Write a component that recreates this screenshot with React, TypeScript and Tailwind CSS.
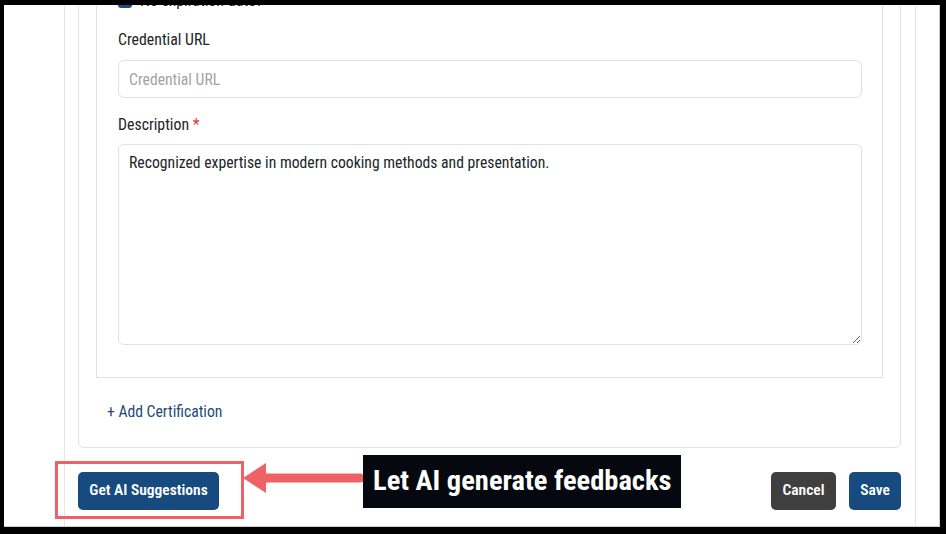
import React from "react";

export default function App() {
  return (
    <div
      className="relative w-[946px] h-[534px] bg-black pt-[5px] pl-[4px] pr-[6px] pb-[7px] overflow-hidden"
      style={{ fontFamily: "Roboto, 'Noto Sans', sans-serif" }}
    >
      <div className="w-full h-full bg-white border-r border-b border-[#cfcfcf] overflow-hidden [font-stretch:semi-condensed]">
        <div className="ml-[60px] w-[852px] h-full border-x border-[#e4e4ea] pl-[13px] pr-[14px] flex flex-col">
          {/* Card */}
          <div className="mt-[-63px] border border-[#e2e2e6] rounded-md px-[17px] pt-[17px] pb-[24px]">
            {/* Inner card */}
            <div className="border border-[#e2e2e6] pl-[21px] pr-[20px] pt-[30px] pb-[32px]">
              <div className="flex items-center h-[20px] gap-[8px]">
                <div className="w-[14px] h-[14px] rounded-[3px] bg-[#1d4b7c]" />
                <span className="text-[16px] text-[#212529]">No expiration date?</span>
              </div>
              <label className="block mt-[18px] text-[15.8px] leading-[22px] text-[#212529]">
                Credential URL
              </label>
              <input
                className="mt-[9px] block w-full h-[38px] border border-[#dee2e6] rounded-[6px] px-[10px] text-[15.7px] text-[#212529] placeholder:text-[#a3a3a3] outline-none [font-stretch:semi-condensed]"
                placeholder="Credential URL"
              />
              <label className="block mt-[16px] text-[15.8px] leading-[22px] text-[#212529]">
                Description <span className="text-[#dc3545]">*</span>
              </label>
              <textarea
                readOnly
                className="mt-[8px] block w-full h-[201px] border border-[#dee2e6] rounded-[6px] px-[10px] py-[7px] text-[15.7px] leading-[22px] text-[#212529] outline-none [font-stretch:semi-condensed]"
                defaultValue="Recognized expertise in modern cooking methods and presentation."
              />
            </div>
            <div className="mt-[23px] ml-[11px] text-[15.7px] leading-[22px] text-[#1d4b7c]">
              + Add Certification
            </div>
          </div>
          {/* Buttons */}
          <div className="mt-[24px] flex items-center justify-between">
            <button className="h-[38px] w-[141px] rounded-[5px] bg-[#174a7e] text-white text-[15.5px] font-semibold [font-stretch:semi-condensed]">
              Get AI Suggestions
            </button>
            <div className="flex gap-[13px]">
              <button className="h-[38px] w-[65px] rounded-[5px] bg-[#3f3f3f] text-white text-[15.5px] font-semibold [font-stretch:semi-condensed]">
                Cancel
              </button>
              <button className="h-[38px] w-[52px] rounded-[5px] bg-[#174a7e] text-white text-[15.5px] font-semibold [font-stretch:semi-condensed]">
                Save
              </button>
            </div>
          </div>
        </div>
      </div>

      {/* Annotations */}
      <div className="absolute left-[55px] top-[461px] w-[189px] h-[58px] border-[3px] border-[#ef6164]" />
      <svg className="absolute left-[242px] top-[462px]" width="124" height="32" viewBox="0 0 124 32">
        <path d="M1 16 L24 1 L24 31 Z" fill="#ef6164" />
        <line x1="22" y1="16" x2="118" y2="16" stroke="#ef6164" strokeWidth="9" strokeLinecap="round" />
      </svg>
      <div className="absolute left-[363px] top-[455px] w-[318px] h-[53px] bg-[#05080f] flex items-center pl-[10px]">
        <span className="whitespace-nowrap text-white text-[28.5px] font-bold [font-stretch:semi-condensed]">
          Let AI generate feedbacks
        </span>
      </div>
    </div>
  );
}
